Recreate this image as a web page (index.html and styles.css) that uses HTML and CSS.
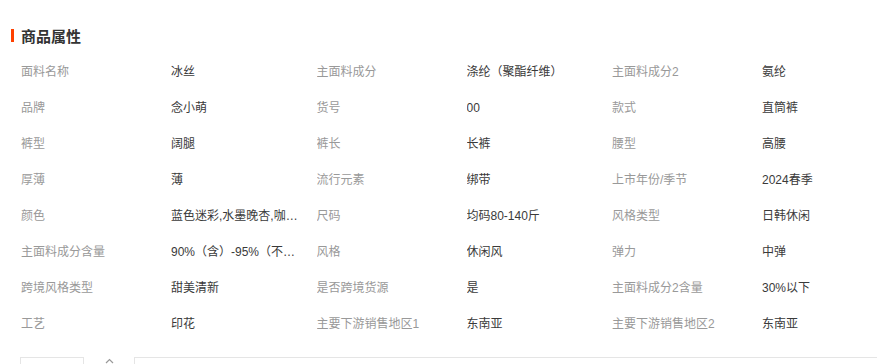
FILE: index.html
```html
<!DOCTYPE html>
<html lang="zh-CN">
<head>
    <meta charset="UTF-8">
    <meta name="viewport" content="width=device-width, initial-scale=1.0">
    <title>商品属性</title>
    <link rel="stylesheet" href="styles.css">
</head>
<body>
    <div class="atributos">
        <h2 class="titulo">商品属性</h2>
        <div class="grade">
            <span class="rotulo">面料名称</span><span class="valor">冰丝</span>
            <span class="rotulo">主面料成分</span><span class="valor">涤纶（聚酯纤维）</span>
            <span class="rotulo">主面料成分2</span><span class="valor">氨纶</span>

            <span class="rotulo">品牌</span><span class="valor">念小萌</span>
            <span class="rotulo">货号</span><span class="valor">00</span>
            <span class="rotulo">款式</span><span class="valor">直筒裤</span>

            <span class="rotulo">裤型</span><span class="valor">阔腿</span>
            <span class="rotulo">裤长</span><span class="valor">长裤</span>
            <span class="rotulo">腰型</span><span class="valor">高腰</span>

            <span class="rotulo">厚薄</span><span class="valor">薄</span>
            <span class="rotulo">流行元素</span><span class="valor">绑带</span>
            <span class="rotulo">上市年份/季节</span><span class="valor">2024春季</span>

            <span class="rotulo">颜色</span><span class="valor">蓝色迷彩,水墨晚杏,咖啡色</span>
            <span class="rotulo">尺码</span><span class="valor">均码80-140斤</span>
            <span class="rotulo">风格类型</span><span class="valor">日韩休闲</span>

            <span class="rotulo">主面料成分含量</span><span class="valor">90%（含）-95%（不含）</span>
            <span class="rotulo">风格</span><span class="valor">休闲风</span>
            <span class="rotulo">弹力</span><span class="valor">中弹</span>

            <span class="rotulo">跨境风格类型</span><span class="valor">甜美清新</span>
            <span class="rotulo">是否跨境货源</span><span class="valor">是</span>
            <span class="rotulo">主面料成分2含量</span><span class="valor">30%以下</span>

            <span class="rotulo">工艺</span><span class="valor">印花</span>
            <span class="rotulo">主要下游销售地区1</span><span class="valor">东南亚</span>
            <span class="rotulo">主要下游销售地区2</span><span class="valor">东南亚</span>
        </div>
    </div>

    <div class="rodape">
        <div class="caixa-pequena"></div>
        <div class="seta">
            <svg width="9" height="6" viewBox="0 0 9 6"><path d="M1 5 L4.5 1.5 L8 5" fill="none" stroke="#999" stroke-width="1.2"/></svg>
        </div>
        <div class="caixa-grande"></div>
    </div>
</body>
</html>
```

FILE: styles.css
```css
/* Reset CSS */
* {
    margin: 0;
    padding: 0;
    box-sizing: border-box;
}
body {
    font-family: "Liberation Sans", "Noto Sans CJK SC", sans-serif;
    font-size: 12px;
    color: #333;
    background-color: #fff;
    overflow: hidden;
}
.atributos {
    padding: 23px 0 0 11px;
}
.titulo {
    display: flex;
    align-items: center;
    height: 24px;
    font-size: 15px;
    font-weight: bold;
    color: #333;
}
/* barrinha vermelha antes do título */
.titulo::before {
    content: "";
    width: 3px;
    height: 13px;
    background-color: #ff4000;
    margin-right: 7px;
}
.grade {
    display: grid;
    grid-template-columns: 150px 145.5px 150px 145.5px 150px 145.5px;
    grid-auto-rows: 36px;
    margin-top: 7px;
    padding-left: 10px;
}
.rotulo, .valor {
    display: block;
    line-height: 36px;
    white-space: nowrap;
    overflow: hidden;
}
.rotulo {
    color: #999;
}
.valor {
    color: #3a3a3a;
    text-overflow: ellipsis;
    padding-right: 16px;
}
.rodape {
    display: flex;
    margin-top: 15px;
    padding-left: 20px;
    margin-right: -2px;
    height: 7px;
}
.caixa-pequena {
    width: 64px;
    border: 1px solid #e5e5e5;
    border-bottom: none;
}
.seta {
    width: 50px;
    display: flex;
    justify-content: center;
    padding-top: 1px;
}
.caixa-grande {
    flex: 1;
    border: 1px solid #e5e5e5;
    border-bottom: none;
}
```
